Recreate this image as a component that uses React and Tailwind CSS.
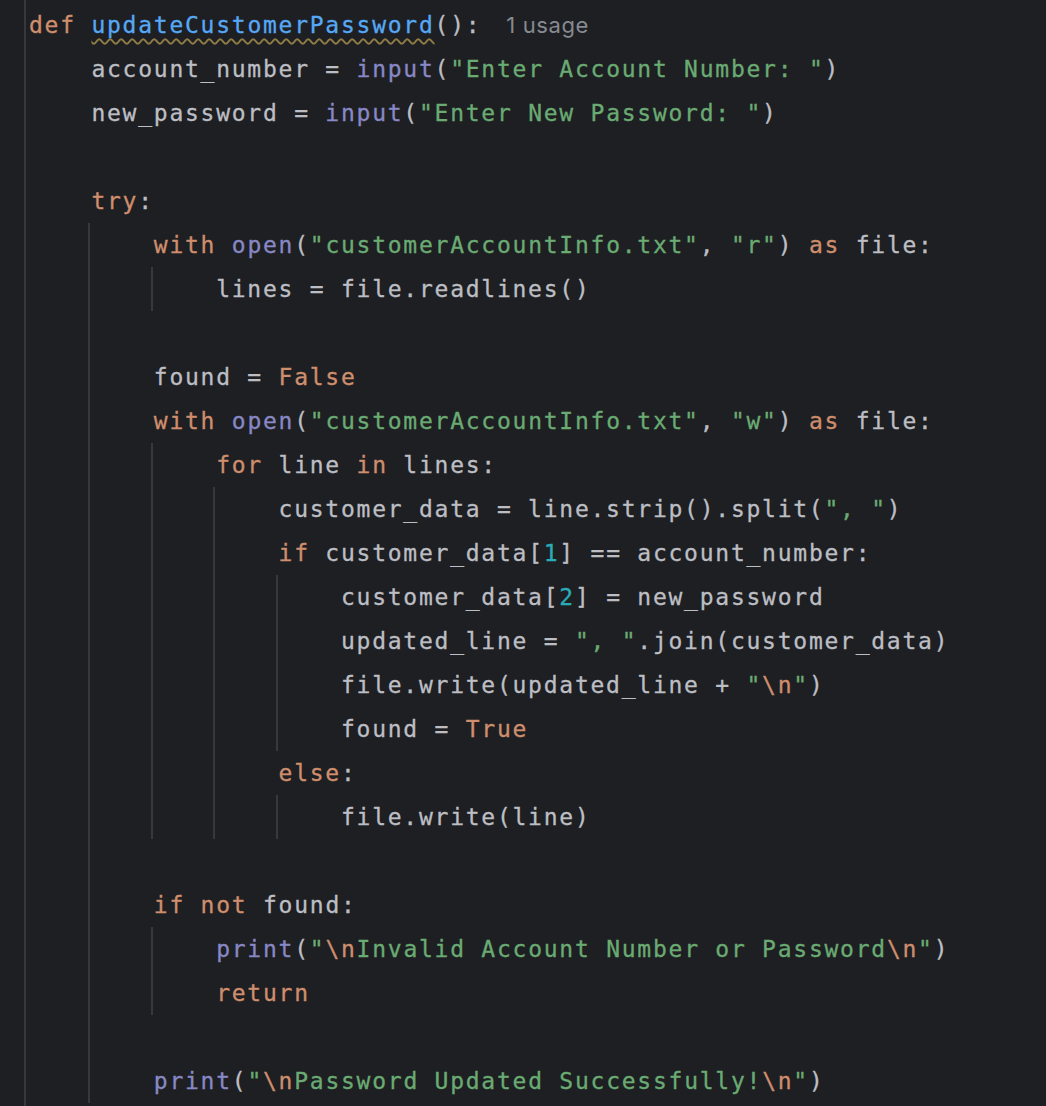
import React from "react";

const K = "text-[#cf8e6d]";
const F =
  "text-[#56a8f5] underline decoration-wavy decoration-[#8f7d45] decoration-[1.5px] underline-offset-[5px]";
const B = "text-[#8888c6]";
const S = "text-[#6aab73]";
const N = "text-[#2aacb8]";

const lines = [
  { indent: 0, guides: [], tokens: [["def", K], " ", ["updateCustomerPassword", F], "():"], hint: "1 usage" },
  { indent: 1, guides: [], tokens: ["account_number = ", ["input", B], "(", ['"Enter Account Number: "', S], ")"] },
  { indent: 1, guides: [], tokens: ["new_password = ", ["input", B], "(", ['"Enter New Password: "', S], ")"] },
  { indent: 0, guides: [], tokens: [] },
  { indent: 1, guides: [], tokens: [["try", K], ":"] },
  { indent: 2, guides: [1], tokens: [["with", K], " ", ["open", B], "(", ['"customerAccountInfo.txt"', S], ", ", ['"r"', S], ") ", ["as", K], " file:"] },
  { indent: 3, guides: [1, 2], tokens: ["lines = file.readlines()"] },
  { indent: 0, guides: [1], tokens: [] },
  { indent: 2, guides: [1], tokens: ["found = ", ["False", K]] },
  { indent: 2, guides: [1], tokens: [["with", K], " ", ["open", B], "(", ['"customerAccountInfo.txt"', S], ", ", ['"w"', S], ") ", ["as", K], " file:"] },
  { indent: 3, guides: [1, 2], tokens: [["for", K], " line ", ["in", K], " lines:"] },
  { indent: 4, guides: [1, 2, 3], tokens: ["customer_data = line.strip().split(", ['", "', S], ")"] },
  { indent: 4, guides: [1, 2, 3], tokens: [["if", K], " customer_data[", ["1", N], "] == account_number:"] },
  { indent: 5, guides: [1, 2, 3, 4], tokens: ["customer_data[", ["2", N], "] = new_password"] },
  { indent: 5, guides: [1, 2, 3, 4], tokens: ["updated_line = ", ['", "', S], ".join(customer_data)"] },
  { indent: 5, guides: [1, 2, 3, 4], tokens: ["file.write(updated_line + ", ['"', S], ["\\n", K], ['"', S], ")"] },
  { indent: 5, guides: [1, 2, 3, 4], tokens: ["found = ", ["True", K]] },
  { indent: 4, guides: [1, 2, 3], tokens: [["else", K], ":"] },
  { indent: 5, guides: [1, 2, 3, 4], tokens: ["file.write(line)"] },
  { indent: 0, guides: [1], tokens: [] },
  { indent: 2, guides: [1], tokens: [["if", K], " ", ["not", K], " found:"] },
  { indent: 3, guides: [1, 2], tokens: [["print", B], "(", ['"', S], ["\\n", K], ["Invalid Account Number or Password", S], ["\\n", K], ['"', S], ")"] },
  { indent: 3, guides: [1, 2], tokens: [["return", K]] },
  { indent: 0, guides: [1], tokens: [] },
  { indent: 2, guides: [1], tokens: [["print", B], "(", ['"', S], ["\\n", K], ["Password Updated Successfully!", S], ["\\n", K], ['"', S], ")"] },
];

function Row({ line }) {
  const cells = Math.max(line.indent, line.guides.length ? Math.max(...line.guides) + 1 : 0);
  return (
    <div className="flex h-[44px] whitespace-pre">
      {Array.from({ length: cells }, (_, i) =>
        line.guides.includes(i) ? (
          <span key={i} className="w-[62.4px] shrink-0 -ml-[3px] mr-[3px] border-l-2 border-[#36383d]" />
        ) : (
          <span key={i} className="w-[62.4px] shrink-0" />
        )
      )}
      <span>
        {line.tokens.map((t, i) =>
          typeof t === "string" ? <span key={i}>{t}</span> : <span key={i} className={t[1]}>{t[0]}</span>
        )}
        {line.hint && (
          <span className="ml-[25px] font-['Inter',sans-serif] text-[22px] tracking-[0.6px] text-[#868a91] [-webkit-text-stroke:0px]">
            {line.hint}
          </span>
        )}
      </span>
    </div>
  );
}

export default function App() {
  return (
    <div className="flex min-h-screen overflow-hidden bg-[#1e1f22] text-[#bcbec4] font-['DejaVu_Sans_Mono',monospace] text-[23px] leading-[44px] tracking-[1.75px] [-webkit-text-stroke:0.3px]">
      <div className="ml-[24px] w-[2px] shrink-0 bg-[#36383d]" />
      <div className="flex flex-col pt-[3px] pl-[3px]">
        {lines.map((line, i) => (
          <Row key={i} line={line} />
        ))}
      </div>
    </div>
  );
}
